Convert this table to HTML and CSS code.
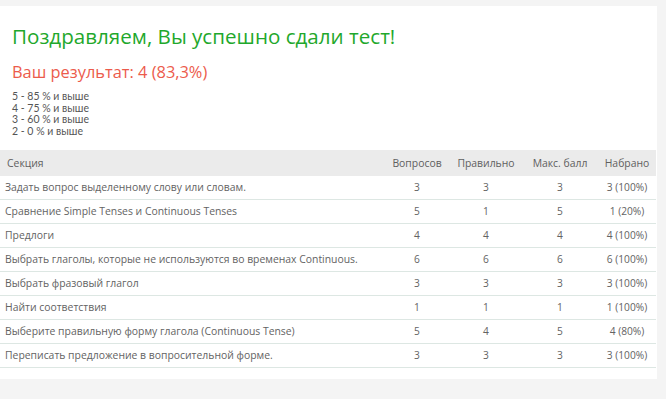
FILE: index.html
```html
<!DOCTYPE html>
<html lang="ru">
<head>
<meta charset="utf-8">
<title>Результат теста</title>
<link rel="stylesheet" href="styles.css">
</head>
<body>
<div class="card">
  <div class="intro">
    <h1 class="title">Поздравляем, Вы успешно сдали тест!</h1>
    <h2 class="score">Ваш результат: 4 (83,3%)</h2>
    <div class="scale">
      <div>5 - 85 % и выше</div>
      <div>4 - 75 % и выше</div>
      <div>3 - 60 % и выше</div>
      <div>2 - 0 % и выше</div>
    </div>
  </div>
  <table class="results">
    <colgroup>
      <col class="c-sec"><col class="c-q"><col class="c-ok"><col class="c-max"><col class="c-got">
    </colgroup>
    <thead>
      <tr><th class="sec">Секция</th><th>Вопросов</th><th>Правильно</th><th>Макс. балл</th><th>Набрано</th></tr>
    </thead>
    <tbody>
      <tr><td class="sec">Задать вопрос выделенному слову или словам.</td><td>3</td><td>3</td><td>3</td><td>3 (100%)</td></tr>
      <tr><td class="sec">Сравнение Simple Tenses и Continuous Tenses</td><td>5</td><td>1</td><td>5</td><td>1 (20%)</td></tr>
      <tr><td class="sec">Предлоги</td><td>4</td><td>4</td><td>4</td><td>4 (100%)</td></tr>
      <tr><td class="sec">Выбрать глаголы, которые не используются во временах Continuous.</td><td>6</td><td>6</td><td>6</td><td>6 (100%)</td></tr>
      <tr><td class="sec">Выбрать фразовый глагол</td><td>3</td><td>3</td><td>3</td><td>3 (100%)</td></tr>
      <tr><td class="sec">Найти соответствия</td><td>1</td><td>1</td><td>1</td><td>1 (100%)</td></tr>
      <tr><td class="sec">Выберите правильную форму глагола (Continuous Tense)</td><td>5</td><td>4</td><td>5</td><td>4 (80%)</td></tr>
      <tr><td class="sec">Переписать предложение в вопросительной форме.</td><td>3</td><td>3</td><td>3</td><td>3 (100%)</td></tr>
    </tbody>
  </table>
</div>
</body>
</html>
```
FILE: styles.css
```css
html, body {
  margin: 0;
  padding: 0;
  background: #f4f4f4;
}
body {
  padding-top: 6px;
  font-family: "Open Sans", "Liberation Sans", sans-serif;
}
.card {
  background: #ffffff;
  width: 657px;
  padding: 0 0 11px 0;
  box-sizing: border-box;
}
.intro {
  padding: 16px 12px 12px 12px;
}
.title {
  margin: 0;
  font-family: "Open Sans", sans-serif;
  font-weight: 400;
  font-size: 20.6px;
  line-height: 28px;
  color: #1fa82c;
}
.score {
  margin: 10px 0 0 0;
  font-family: "Open Sans", sans-serif;
  font-weight: 400;
  font-size: 16.4px;
  line-height: 24px;
  color: #ec5b4c;
}
.scale {
  margin-top: 7px;
  font-family: Lato, sans-serif;
  font-size: 10.5px;
  line-height: 11.7px;
  color: #555555;
}
.results {
  width: 656px;
  border-collapse: collapse;
  table-layout: fixed;
  font-family: "Open Sans", sans-serif;
  font-size: 10.2px;
  color: #636363;
}
.c-sec { width: 384px; }
.c-q { width: 66px; }
.c-ok { width: 72px; }
.c-max { width: 76px; }
.c-got { width: 58px; }
.results th {
  background: #ebebeb;
  font-weight: 400;
  font-size: 10.4px;
  color: #606060;
  height: 26px;
  padding: 0;
  text-align: center;
}
.results th.sec {
  text-align: left;
  padding-left: 7px;
}
.results td {
  height: 23px;
  padding: 0;
  text-align: center;
  border-bottom: 1px solid #dde7e3;
}
.results td.sec {
  text-align: left;
  padding-left: 5px;
  font-size: 10.4px;
  white-space: nowrap;
}
```
